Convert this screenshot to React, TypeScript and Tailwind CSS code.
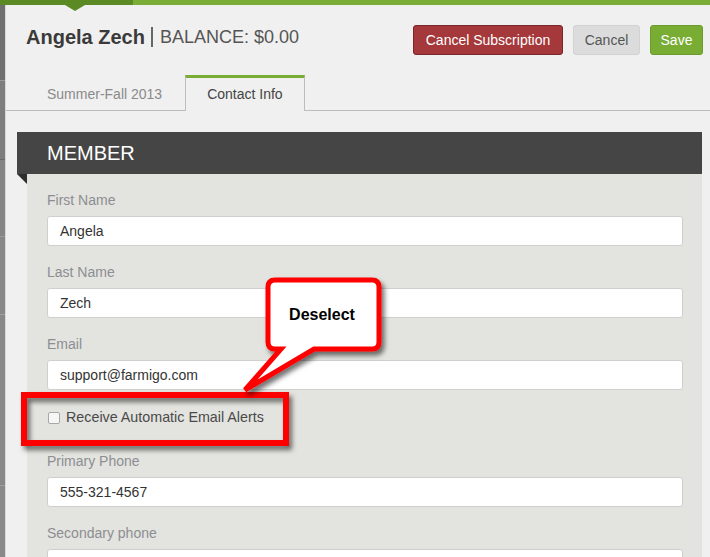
import React from "react";

const fields1 = [
  { label: "First Name", value: "Angela" },
  { label: "Last Name", value: "Zech" },
  { label: "Email", value: "support@farmigo.com" },
];

function Field({ label, value }: { label: string; value: string }) {
  return (
    <div className="mb-[16px]">
      <div className="h-[20px] leading-[20px] text-[14px] text-[#8c8e92] mb-[6px]">{label}</div>
      <div className="h-[30px] bg-white border border-[#cfcfcf] rounded-[3px] pl-[12px] flex items-center text-[14px] text-[#333]">
        {value}
      </div>
    </div>
  );
}

export default function App() {
  return (
    <div
      className="relative w-[710px] h-[557px] overflow-hidden bg-[#f0f0f0] flex flex-col"
      style={{ fontFamily: '"Liberation Sans", Arial, sans-serif' }}
    >
      {/* top green bar */}
      <div className="flex h-[5px] shrink-0">
        <div className="w-[133px] bg-[#5b8a25] relative">
          <div className="absolute left-[65px] top-[5px] w-0 h-0 border-l-[10px] border-r-[10px] border-t-[6px] border-l-transparent border-r-transparent border-t-[#5b8a25]" />
        </div>
        <div className="flex-1 bg-[#7aad35]" />
      </div>
      <div className="flex flex-1 min-h-0">
        {/* left strip */}
        <div className="w-[6px] shrink-0 flex flex-col border-r border-[#d8d8d8]">
          <div className="h-[76px] bg-[#6f6f6f] border-b border-[#9a9a9a]" />
          <div className="h-[79px] bg-[#7e7e7e] border-b border-[#6a6a6a]" />
          <div className="h-[77px] bg-[#858585] border-b border-[#9c9c9c]" />
          <div className="h-[78px] bg-[#878787] border-b border-[#a0a0a0]" />
          <div className="h-[171px] bg-[#888888] border-b border-[#a0a0a0]" />
          <div className="flex-1 bg-[#898989]" />
        </div>
        {/* main */}
        <div className="flex-1 flex flex-col min-w-0">
          {/* header */}
          <div className="h-[70px] shrink-0 flex justify-between items-start pt-[20px] pl-[20px] pr-[7px]">
            <div className="flex items-center h-[24px]">
              <span className="text-[20px] leading-[24px] font-bold text-[#3a3a3a]">Angela Zech</span>
              <span className="w-[2px] h-[20px] bg-[#666] ml-[6px] mr-[7px]" />
              <span className="text-[18px] leading-[24px] text-[#555]">BALANCE: $0.00</span>
            </div>
            <div className="flex gap-[10px]">
              <div className="w-[150px] h-[30px] rounded-[3px] bg-[#a5383a] border border-[#7a2527] flex items-center justify-center text-[14px] text-white">
                Cancel Subscription
              </div>
              <div className="w-[67px] h-[30px] rounded-[3px] bg-[#dcdcdc] border border-[#d2d2d2] flex items-center justify-center text-[14px] text-[#555]">
                Cancel
              </div>
              <div className="w-[53px] h-[30px] rounded-[3px] bg-[#78ac33] border border-[#6b9c2b] flex items-center justify-center text-[14px] text-white">
                Save
              </div>
            </div>
          </div>
          {/* tabs */}
          <div className="h-[36px] shrink-0 flex items-end border-b border-[#bdbdbd] pl-[21px] gap-[3px]">
            <div className="h-[35px] px-[20px] pt-[3px] flex items-center text-[14px] text-[#8a8a8a]">Summer-Fall 2013</div>
            <div className="h-[36px] -mb-px px-[21px] border-t-[3px] border-t-[#7aad35] border-x border-x-[#bdbdbd] bg-[#f0f0f0] flex items-center text-[14px] text-[#444]">
              Contact Info
            </div>
          </div>
          {/* panel */}
          <div className="flex-1 min-h-0 mt-[21px] ml-[11px] mr-[8px] flex flex-col">
            <div className="h-[42px] shrink-0 bg-[#454545] pl-[30px] flex items-center text-[20px] text-white">MEMBER</div>
            <div className="flex flex-1 min-h-0">
              <div className="w-[10px] shrink-0">
                <svg width="10" height="10" viewBox="0 0 10 10">
                  <polygon points="0,0 10,0 10,10" fill="#2e2e2e" />
                </svg>
              </div>
              <div className="flex-1 bg-[#e3e3df] pt-[16px] pl-[20px] pr-[19px]">
                {fields1.map((f) => (
                  <Field key={f.label} label={f.label} value={f.value} />
                ))}
                <div className="h-[24px] mb-[21px] flex items-center">
                  <div className="w-[12px] h-[12px] border border-[#a8a8a8] rounded-[2px] bg-[#f6f6f6] ml-px" />
                  <span className="ml-[6px] text-[14.3px] text-[#4a4a4a]">Receive Automatic Email Alerts</span>
                </div>
                <Field label="Primary Phone" value="555-321-4567" />
                <Field label="Secondary phone" value="" />
              </div>
            </div>
          </div>
        </div>
      </div>

      {/* annotation overlay */}
      <svg className="absolute inset-0 pointer-events-none" width="710" height="557" viewBox="0 0 710 557">
        <defs>
          <filter id="sh" x="-20%" y="-20%" width="140%" height="150%">
            <feDropShadow dx="3" dy="4" stdDeviation="2.5" floodColor="#000" floodOpacity="0.55" />
          </filter>
        </defs>
        <rect x="24" y="395" width="262" height="48" fill="none" stroke="#ff0000" strokeWidth="6" filter="url(#sh)" />
        <path
          d="M 275 280 H 372 Q 379 280 379 287 V 342 Q 379 349 372 349 H 314 L 245 390 L 281 349 H 275 Q 268 349 268 342 V 287 Q 268 280 275 280 Z"
          fill="#ffffff"
          stroke="#ff0000"
          strokeWidth="5"
          strokeLinejoin="miter"
          filter="url(#sh)"
        />
        <text
          x="322"
          y="320"
          textAnchor="middle"
          fontFamily='"Liberation Sans", Arial, sans-serif'
          fontWeight="bold"
          fontSize="16"
          fill="#000"
        >
          Deselect
        </text>
      </svg>
    </div>
  );
}
